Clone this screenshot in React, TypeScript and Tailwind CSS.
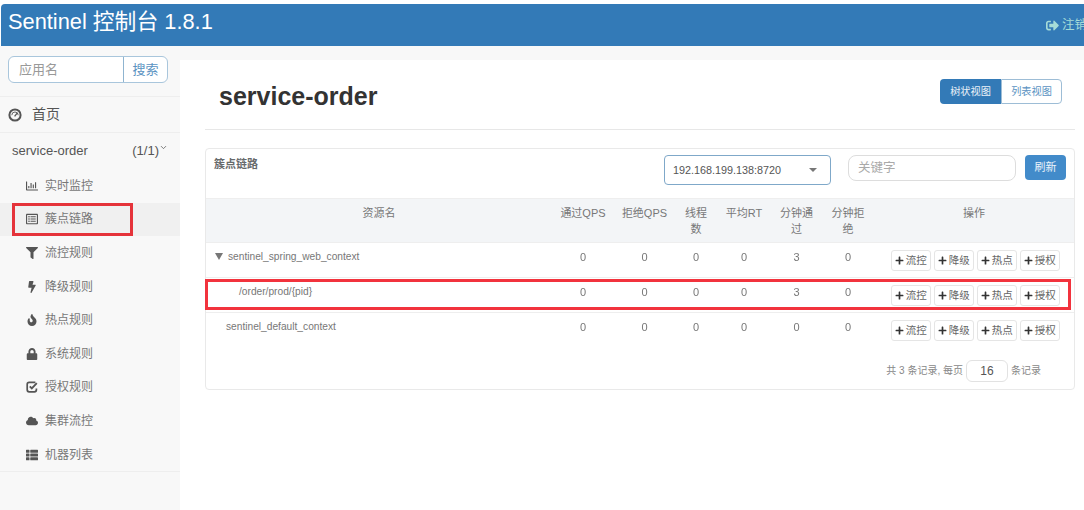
import { IconType } from 'react-icons'
import {
  FaBolt,
  FaCloud,
  FaFilter,
  FaFire,
  FaLock,
  FaPlus,
  FaRegChartBar,
  FaRegListAlt,
  FaSignOutAlt,
  FaThList,
} from 'react-icons/fa'
import { ChevronDown } from 'lucide-react'

const font = 'font-["Liberation_Sans","Noto_Sans_CJK_SC",sans-serif]'

function CheckIcon() {
  return (
    <svg width="12" height="12" viewBox="0 0 12 12" fill="none">
      <path d="M10.4 7.4v1.4a2 2 0 0 1-2 2H3.2a2 2 0 0 1-2-2V3.4a2 2 0 0 1 2-2h6.2" stroke="currentColor" strokeWidth="1.7" />
      <path d="M3.8 5.4l2 2L10.8 2.2" stroke="currentColor" strokeWidth="1.9" />
    </svg>
  )
}

function DashboardIcon() {
  return (
    <svg width="14" height="14" viewBox="0 0 14 14" fill="none">
      <circle cx="7" cy="7" r="5.6" stroke="currentColor" strokeWidth="2" />
      <path d="M3.8 7.2a3.2 3.2 0 0 1 6.4 0" stroke="currentColor" strokeWidth="0.9" />
      <path d="M6.6 8.4L9.4 4.8" stroke="currentColor" strokeWidth="1.3" />
    </svg>
  )
}

const menu: { label: string; icon: IconType | typeof CheckIcon; active?: boolean }[] = [
  { label: '实时监控', icon: FaRegChartBar },
  { label: '簇点链路', icon: FaRegListAlt, active: true },
  { label: '流控规则', icon: FaFilter },
  { label: '降级规则', icon: FaBolt },
  { label: '热点规则', icon: FaFire },
  { label: '系统规则', icon: FaLock },
  { label: '授权规则', icon: CheckIcon },
  { label: '集群流控', icon: FaCloud },
  { label: '机器列表', icon: FaThList },
]

const rows = [
  { name: 'sentinel_spring_web_context', indent: 'pl-[9px]', caret: true, values: [0, 0, 0, 0, 3, 0] },
  { name: '/order/prod/{pid}', indent: 'pl-[33px]', caret: false, values: [0, 0, 0, 0, 3, 0] },
  { name: 'sentinel_default_context', indent: 'pl-[20px]', caret: false, values: [0, 0, 0, 0, 0, 0] },
]

const columns = 'grid grid-cols-[346px_62px_61px_42px_54px_51px_52px_200px]'

function Sidebar() {
  return (
    <aside className="w-[180px] shrink-0 bg-[#f8f8f8] text-[#777777]">
      <div className="h-[51px] px-2 pt-[10px] border-b border-[#eeeeee]">
        <div className="flex h-[27px] w-[160px] rounded-md border border-[#a9c6dc] bg-white text-[13px]">
          <span className="flex-1 pl-[10px] leading-[25px] text-[#999999]">应用名</span>
          <span className="w-[44px] rounded-r-md border-l border-[#8fb4d0] text-center leading-[26px] text-[#5b93c2]">搜索</span>
        </div>
      </div>
      <div className="flex h-[36px] items-center gap-[10px] border-b border-[#eeeeee] pl-2 text-[14px] text-[#555555]">
        <DashboardIcon />
        <span>首页</span>
      </div>
      <div className="flex h-[36px] items-center justify-between pl-3 pr-3 text-[13px] text-[#555555]">
        <span>service-order</span>
        <span className="flex items-start">
          (1/1)
          <ChevronDown size={9} strokeWidth={2} className="mt-[2px]" />
        </span>
      </div>
      <ul className="border-b border-[#eeeeee]">
        {menu.map(item => (
          <li
            key={item.label}
            className={`flex h-[33.6px] items-center pl-[26px] text-[12px] ${item.active ? 'bg-[#f0f0f0]' : ''}`}
          >
            <span className="flex w-[19px] text-[12px] text-[#555555]">
              <item.icon />
            </span>
            {item.label}
          </li>
        ))}
      </ul>
    </aside>
  )
}

function TableRow({ row }: { row: (typeof rows)[number] }) {
  return (
    <div className={`${columns} h-[35px] items-center border-t border-[#eeeeee] text-[10.2px] text-[#777777]`}>
      <div className={`flex items-center pb-[6px] ${row.indent}`}>
        {row.caret && <span className="mr-[5px] h-0 w-0 border-x-[4px] border-t-[7px] border-x-transparent border-t-[#777777]" />}
        {row.name}
      </div>
      {row.values.map((v, i) => (
        <div key={i} className="pb-[6px] text-center text-[11px] will-change-transform">{v}</div>
      ))}
      <div className="flex gap-[2.5px] pl-[16.5px] pt-[1px]">
        {['流控', '降级', '热点', '授权'].map(label => (
          <span
            key={label}
            className="flex h-[21px] w-[40.5px] items-center justify-center gap-[2px] rounded-[3px] border border-[#e5e5e5] bg-white text-[10.5px] text-[#666666]"
          >
            <FaPlus className="text-[9px] text-[#333333]" />
            {label}
          </span>
        ))}
      </div>
    </div>
  )
}

function ResourceCard() {
  return (
    <section className="mt-[18px] w-[870px] rounded border border-[#e9e9e9]">
      <div className="flex h-[49px] pl-2 pr-2 pt-[6px]">
        <h2 className="mt-[1px] w-[44px] shrink-0 whitespace-nowrap text-[11px] font-bold text-[#676a6c]">簇点链路</h2>
        <div className="ml-[406px] flex h-[30px] w-[167px] shrink-0 items-center justify-between rounded border border-[#7fa8c9] px-2 text-[10.8px] text-[#555555]">
          192.168.199.138:8720
          <span className="mr-[5px] h-0 w-0 border-x-[4px] border-t-[4px] border-x-transparent border-t-[#777777]" />
        </div>
        <div className="ml-[17px] h-[26px] w-[168px] shrink-0 rounded-lg border border-[#dddddd] pl-[9px] text-[12.5px] leading-[25px] text-[#aaaaaa]">
          关键字
        </div>
        <div className="ml-[9px] h-[25px] w-[41px] shrink-0 rounded bg-[#428bca] text-center text-[11px] leading-[25px] text-white/90">
          刷新
        </div>
      </div>
      <div className={`${columns} h-[44px] border-t border-[#eeeeee] bg-[#f3f5f7] pt-[6px] text-center text-[11px] leading-[16px] text-[#777777]`}>
        <div>资源名</div>
        <div>通过QPS</div>
        <div>拒绝QPS</div>
        <div className="mx-auto w-[24px]">线程数</div>
        <div>平均RT</div>
        <div className="mx-auto w-[36px]">分钟通过</div>
        <div className="mx-auto w-[36px]">分钟拒绝</div>
        <div>操作</div>
      </div>
      {rows.map(row => (
        <TableRow key={row.name} row={row} />
      ))}
      <div className="flex h-[42px] items-center justify-end gap-[3px] pr-[33px] pt-[5px] text-[10px] text-[#888888]">
        共 3 条记录, 每页
        <span className="h-[22px] w-[42px] rounded-md border border-[#e2e2e2] text-center text-[12px] leading-[20px] text-[#555555]">16</span>
        条记录
      </div>
    </section>
  )
}

export default function App() {
  return (
    <div className={`${font} relative h-[510px] w-[1084px] overflow-hidden bg-white`}>
      <header className="ml-px mt-1 flex h-[42px] items-center justify-between overflow-hidden rounded-tl bg-[#337ab7] pl-[7px] text-white">
        <span className="pb-[6px] text-[21.8px] leading-none">Sentinel 控制台 1.8.1</span>
        <span className="flex w-[38px] shrink-0 items-center gap-[3px] overflow-hidden whitespace-nowrap text-[12.5px] text-[#a6dcd8]">
          <FaSignOutAlt className="shrink-0 text-[13px]" />
          注销
        </span>
      </header>
      <div className="flex h-[464px]">
        <Sidebar />
        <main className="flex-1 bg-white">
          <div className="h-[14px] bg-[#f8f8f8]" />
          <div className="pl-[25px]">
            <div className="flex h-[70px] w-[870px] items-start justify-between border-b border-[#e7e7e7]">
              <h1 className="ml-[14px] mt-[24px] text-[25px] leading-none font-bold text-[#333333]">service-order</h1>
              <div className="mr-[13px] mt-[19px] flex h-[25px] w-[122px] text-[10.2px] leading-[25px]">
                <span className="w-[61px] rounded-l bg-[#337ab7] text-center text-white/90">树状视图</span>
                <span className="flex-1 rounded-r border border-[#9dbdd6] text-center leading-[23px] text-[#5b93c2]">列表视图</span>
              </div>
            </div>
            <ResourceCard />
          </div>
        </main>
      </div>
      <div className="absolute left-[12px] top-[203px] h-[33px] w-[121px] border-[3px] border-[#e5333a]" />
      <div className="absolute left-[205px] top-[279px] h-[31px] w-[866px] border-[3px] border-[#f2333d]" />
    </div>
  )
}
